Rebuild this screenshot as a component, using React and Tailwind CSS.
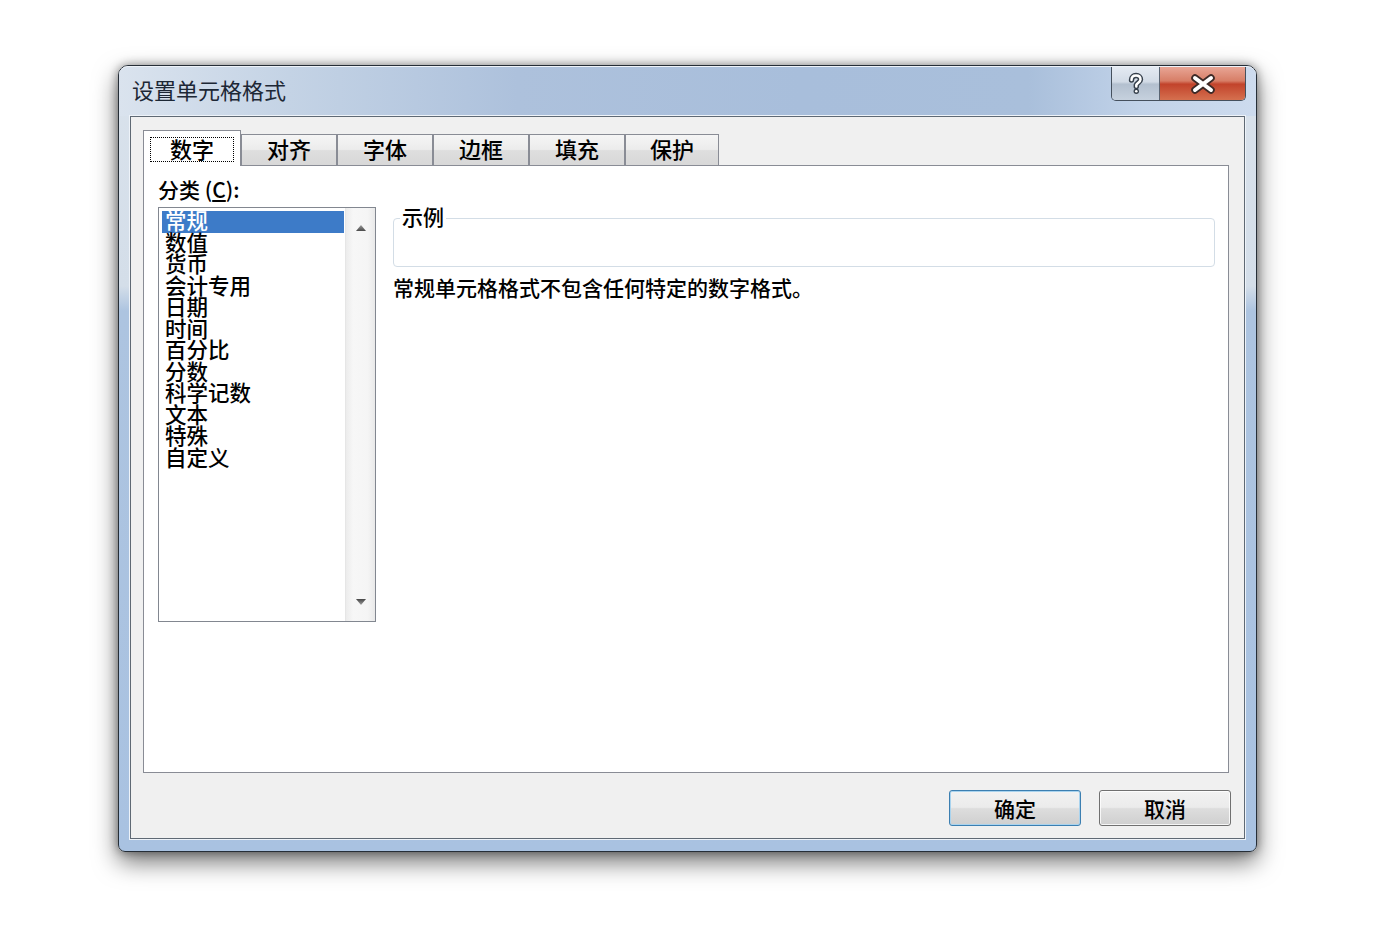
const items = ['常规', '数值', '货币', '会计专用', '日期', '时间', '百分比', '分数', '科学记数', '文本', '特殊', '自定义'];
const tabs = [
  { label: '对齐', w: 'w-[96px]' },
  { label: '字体', w: 'w-[96px]' },
  { label: '边框', w: 'w-[96px]' },
  { label: '填充', w: 'w-[96px]' },
  { label: '保护', w: 'w-[94px]' },
];

function HelpIcon() {
  return (
    <svg width="20" height="24" viewBox="0 0 20 24">
      <path d="M5.5 8 C5.5 5 7.5 3.5 10 3.5 C12.8 3.5 14.5 5.2 14.5 7.6 C14.5 10.2 11 10.8 10.3 13 L10.3 14.5" fill="none" stroke="#36404c" strokeWidth="5.4" strokeLinecap="round" strokeLinejoin="round" />
      <circle cx="10.3" cy="19.3" r="2.7" fill="#36404c" />
      <path d="M5.5 8 C5.5 5 7.5 3.5 10 3.5 C12.8 3.5 14.5 5.2 14.5 7.6 C14.5 10.2 11 10.8 10.3 13 L10.3 14.5" fill="none" stroke="#ffffff" strokeWidth="2.5" strokeLinecap="round" strokeLinejoin="round" />
      <circle cx="10.3" cy="19.3" r="1.3" fill="#ffffff" />
    </svg>
  );
}

function CloseIcon() {
  return (
    <svg width="28" height="20" viewBox="0 0 28 20">
      <path d="M6 4 L22 16 M22 4 L6 16" stroke="#3d2a27" strokeWidth="7.5" strokeLinecap="round" />
      <path d="M6 4 L22 16 M22 4 L6 16" stroke="#ffffff" strokeWidth="4" strokeLinecap="round" />
    </svg>
  );
}

function Arrow({ down }) {
  return (
    <svg width="12" height="8" viewBox="0 0 12 8">
      <defs>
        <linearGradient id={down ? 'ad' : 'au'} x1="0" y1="0" x2="0" y2="1">
          <stop offset="0" stopColor={down ? '#444' : '#9a9a9a'} />
          <stop offset="1" stopColor={down ? '#a0a0a0' : '#4a4a4a'} />
        </linearGradient>
      </defs>
      {down ? (
        <path d="M1 1 L11 1 L6 7 Z" fill="url(#ad)" />
      ) : (
        <path d="M1 7 L11 7 L6 1 Z" fill="url(#au)" />
      )}
    </svg>
  );
}

export default function App() {
  return (
    <div className="min-h-[929px] w-[1393px] bg-white pt-[65px] pl-[118px] font-['Noto_Sans_CJK_SC','Noto_Sans_CJK_JP',sans-serif] font-medium text-black">
      <div className="w-[1139px] h-[787px] flex flex-col rounded-t-[10px] rounded-b-[7px] border border-[#262e37] bg-[linear-gradient(180deg,#d9e2ec_0px,#d4dee9_220px,#adc4e0_245px,#a9c2e1_100%)] shadow-[0_10px_24px_rgba(0,0,0,0.55),0_0_10px_rgba(0,0,0,0.4)]">
        {/* title bar */}
        <div className="h-[50px] flex items-start justify-between rounded-t-[9px] border-t border-[#eef3f9] bg-[linear-gradient(90deg,#dae3ee_0%,#c4d3e5_15%,#adc1dc_35%,#a8bedb_60%,#a9bfdb_80%,#c2d3e9_90%,#cddbee_100%)]">
          <div className="h-full flex items-center pl-[13px] pb-[5px] text-[22px] leading-none font-normal text-[#1d2735]">设置单元格格式</div>
          <div className="mr-[10px] flex h-[34px] overflow-hidden rounded-b-[5px] border border-t-0 border-[#45505d]">
            <div className="w-[48px] h-full flex items-center justify-center border-r border-[#5a6573] bg-[linear-gradient(180deg,#e4eaf2_0%,#d2dbe6_45%,#b3c0cf_52%,#c6d1de_100%)]">
              <HelpIcon />
            </div>
            <div className="w-[85px] h-full flex items-center justify-center bg-[linear-gradient(180deg,#e8a595_0%,#d77e67_42%,#c2432b_52%,#d5704f_100%)]">
              <CloseIcon />
            </div>
          </div>
        </div>

        {/* client area */}
        <div className="mx-[11px] flex-1 flex flex-col border border-[#5f6974] bg-[#f0f0f0] shadow-[0_0_0_1px_#eef3f9]">
          {/* tabs */}
          <div className="mt-[13px] ml-[12px] h-[35px] flex items-end">
            <div className="relative z-10 -mb-px w-[98px] h-[36px] bg-white border border-b-0 border-[#898c95] flex items-start justify-center pt-[6px]">
              <div className="w-[84px] h-[25px] border border-dotted border-black flex items-center justify-center pb-[3px] text-[22px] leading-none">数字</div>
            </div>
            {tabs.map((t) => (
              <div key={t.label} className={`${t.w} h-[31px] border border-b-0 border-[#898c95] bg-[linear-gradient(180deg,#f5f5f5_0%,#ececec_48%,#dedede_52%,#d8d8d8_100%)] flex items-center justify-center pb-[4px] text-[22px] leading-none`}>
                {t.label}
              </div>
            ))}
          </div>

          {/* panel */}
          <div className="ml-[12px] mr-[15px] h-[608px] border border-[#898c95] bg-white flex">
            <div className="ml-[14px] flex flex-col">
              <div className="mt-[11px] h-[26px] leading-[24px] text-[21px]">
                分类 (<span className="underline underline-offset-2">C</span>):
              </div>
              <div className="mt-[4px] w-[218px] h-[415px] border border-[#828790] bg-white flex">
                <ul className="flex-1 pt-[3px] pl-[3px] pr-[1px]">
                  {items.map((it, i) => (
                    <li
                      key={it}
                      className={`h-[21.5px] leading-[18px] text-[21.5px] pl-[3px] whitespace-nowrap ${i === 0 ? 'bg-[#3d7bc8] text-white' : ''}`}
                    >
                      {it}
                    </li>
                  ))}
                </ul>
                <div className="w-[30px] h-full border-l border-[#e6e6e6] bg-[linear-gradient(90deg,#ececec_0%,#f7f7f7_25%,#f5f5f5_75%,#e9e9e9_100%)] flex flex-col items-center justify-between pt-[16px] pb-[15px]">
                  <Arrow />
                  <Arrow down />
                </div>
              </div>
            </div>

            <div className="ml-[17px] mr-[13px] flex-1 flex flex-col">
              <fieldset className="mt-[40px] border border-[#d3dde6] rounded-[4px]">
                <legend className="ml-[6px] px-[2px] pb-[4px] text-[21px] leading-[20px]">示例</legend>
                <div className="h-[36px]" />
              </fieldset>
              <div className="mt-[7px] text-[21px] leading-[26px] whitespace-nowrap">常规单元格格式不包含任何特定的数字格式。</div>
            </div>
          </div>

          {/* buttons */}
          <div className="mt-[17px] mr-[13px] flex justify-end gap-[18px]">
            <button className="w-[132px] h-[36px] rounded-[3px] border border-[#3c7fb1] bg-[linear-gradient(180deg,#f2f2f2_0%,#ebebeb_48%,#dddddd_52%,#cfcfcf_100%)] shadow-[inset_0_0_0_1px_#a9d3ee] text-[21px] leading-none pt-[1px]">
              确定
            </button>
            <button className="w-[132px] h-[36px] rounded-[3px] border border-[#707070] bg-[linear-gradient(180deg,#f2f2f2_0%,#ebebeb_48%,#dddddd_52%,#cfcfcf_100%)] shadow-[inset_0_0_0_1px_rgba(255,255,255,0.8)] text-[21px] leading-none pt-[1px]">
              取消
            </button>
          </div>
        </div>
        <div className="h-[12px]" />
      </div>
    </div>
  );
}
